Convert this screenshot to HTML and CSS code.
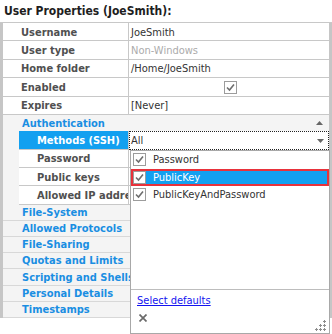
FILE: index.html
```html
<!DOCTYPE html>
<html>
<head>
<meta charset="utf-8">
<link rel="stylesheet" href="styles.css">
</head>
<body>
<div class="title">User Properties (JoeSmith):</div>
<div class="grid">
  <div class="row prop"><div class="label">Username</div><div class="value">JoeSmith</div></div>
  <div class="row prop"><div class="label">User type</div><div class="value muted">Non-Windows</div></div>
  <div class="row prop"><div class="label">Home folder</div><div class="value">/Home/JoeSmith</div></div>
  <div class="row prop"><div class="label">Enabled</div><div class="value centered"><span class="cb"><svg width="11" height="11" viewBox="0 0 11 11"><path d="M2 5.5 L4.5 8 L9 2.5" fill="none" stroke="#6e6e6e" stroke-width="1.6"/></svg></span></div></div>
  <div class="row prop"><div class="label">Expires</div><div class="value">[Never]</div></div>
  <div class="row cat open"><span>Authentication</span><svg class="tri" width="7" height="4" viewBox="0 0 7 4"><path d="M0 4 L3.5 0 L7 4 Z" fill="#666"/></svg></div>
  <div class="row prop sub selected"><div class="indent"></div><div class="label">Methods (SSH)</div><div class="value focus"><span>All</span><svg class="tri" width="7" height="4" viewBox="0 0 7 4"><path d="M0 0 L3.5 4 L7 0 Z" fill="#666"/></svg></div></div>
  <div class="row prop sub"><div class="indent"></div><div class="label">Password</div><div class="value"></div></div>
  <div class="row prop sub"><div class="indent"></div><div class="label">Public keys</div><div class="value"></div></div>
  <div class="row prop sub"><div class="indent"></div><div class="label">Allowed IP addresses</div><div class="value"></div></div>
  <div class="row cat"><span>File-System</span></div>
  <div class="row cat"><span>Allowed Protocols</span></div>
  <div class="row cat"><span>File-Sharing</span></div>
  <div class="row cat"><span>Quotas and Limits</span></div>
  <div class="row cat"><span>Scripting and Shells</span></div>
  <div class="row cat"><span>Personal Details</span></div>
  <div class="row cat"><span>Timestamps</span></div>
</div>

<div class="popup">
  <div class="list">
    <div class="item"><span class="cb"><svg width="11" height="11" viewBox="0 0 11 11"><path d="M2 5.5 L4.5 8 L9 2.5" fill="none" stroke="#6e6e6e" stroke-width="1.6"/></svg></span><span>Password</span></div>
    <div class="item active"><span class="cb"><svg width="11" height="11" viewBox="0 0 11 11"><path d="M2 5.5 L4.5 8 L9 2.5" fill="none" stroke="#6e6e6e" stroke-width="1.6"/></svg></span><span>PublicKey</span></div>
    <div class="item"><span class="cb"><svg width="11" height="11" viewBox="0 0 11 11"><path d="M2 5.5 L4.5 8 L9 2.5" fill="none" stroke="#6e6e6e" stroke-width="1.6"/></svg></span><span>PublicKeyAndPassword</span></div>
  </div>
  <div class="footer">
    <a class="link" href="#">Select defaults</a>
    <div class="footer-bottom">
      <svg class="close" width="8" height="8" viewBox="0 0 8 8"><path d="M0.5 0.5 L7.5 7.5 M7.5 0.5 L0.5 7.5" stroke="#6a6a6a" stroke-width="1.7"/></svg>
      <svg class="grip" width="12" height="11" viewBox="0 0 12 11"><g fill="#8c8c8c"><rect x="9" y="0" width="1" height="3"/><rect x="8" y="1" width="3" height="1"/><rect x="5" y="4" width="1" height="3"/><rect x="4" y="5" width="3" height="1"/><rect x="9" y="4" width="1" height="3"/><rect x="8" y="5" width="3" height="1"/><rect x="1" y="8" width="1" height="3"/><rect x="0" y="9" width="3" height="1"/><rect x="5" y="8" width="1" height="3"/><rect x="4" y="9" width="3" height="1"/><rect x="9" y="8" width="1" height="3"/><rect x="8" y="9" width="3" height="1"/></g></svg>
    </div>
  </div>
</div>
</body>
</html>
```

FILE: styles.css
```css
* { box-sizing: border-box; }
html, body { margin: 0; padding: 0; }
body {
  width: 332px;
  height: 334px;
  background: #fff;
  font-family: "DejaVu Sans Condensed", "DejaVu Sans", sans-serif;
  font-size: 11px;
  position: relative;
  overflow: hidden;
  color: #333;
}
.title {
  height: 23px;
  border-bottom: 1px solid #c8c8c8;
  padding-left: 4px;
  line-height: 23px;
  font-weight: bold;
  font-size: 12px;
  color: #1e1e1e;
}
.grid {
  border-left: 3px solid #c6c6c6;
  border-right: 3px solid #c6c6c6;
}
.row { display: flex; }
.prop { height: 18.4px; }
.label {
  width: 126px;
  flex: none;
  border-right: 1px solid #c8c8c8;
  border-bottom: 1px solid #c8c8c8;
  padding-left: 18px;
  padding-top: 1px;
  font-weight: bold;
  color: #505050;
  white-space: nowrap;
  overflow: hidden;
  display: flex;
  align-items: center;
}
.value {
  flex: 1;
  border-bottom: 1px solid #c8c8c8;
  padding-left: 2px;
  padding-top: 1px;
  color: #333;
  white-space: nowrap;
  display: flex;
  align-items: center;
}
.value.muted { color: #ababab; }
.value.centered { justify-content: center; }
.sub .indent { width: 16px; flex: none; background: #f4f4f4; }
.sub .label { width: 110px; }
.selected .label { background: #12a0f0; color: #fff; }
.value.focus {
  border: 1px dotted #222;
  padding-left: 1px;
  padding-right: 4px;
  justify-content: space-between;
}
.cat {
  height: 16.2px;
  background: #f4f4f4;
  border-bottom: 1px solid #d8d8d8;
  padding-left: 19px;
  padding-right: 6px;
  align-items: center;
  justify-content: space-between;
  font-weight: bold;
  color: #1a8ee2;
  white-space: nowrap;
}
.cat.open { border-bottom: none; }
.cb {
  width: 13px;
  height: 13px;
  border: 1px solid #9c9c9c;
  background: #fff;
  display: flex;
  align-items: center;
  justify-content: center;
  flex: none;
}
.popup {
  position: absolute;
  left: 130px;
  top: 150px;
  width: 200px;
  height: 184px;
  border: 1px solid #a8a8a8;
  background: #fff;
  display: flex;
  flex-direction: column;
}
.list {
  height: 139px;
  flex: none;
  border-bottom: 1px solid #bdbdbd;
}
.item {
  height: 17.5px;
  display: flex;
  align-items: center;
  gap: 7px;
  padding-left: 2px;
  color: #333;
  white-space: nowrap;
}
.item.active {
  background: #12a0f0;
  color: #fff;
  border: 2px solid #e8323b;
  padding-left: 0;
}
.footer {
  flex: 1;
  padding: 2px 2px 2px 6px;
  display: flex;
  flex-direction: column;
}
.link {
  color: #1414f0;
  text-decoration: underline;
  line-height: 18px;
}
.footer-bottom {
  flex: 1;
  display: flex;
  justify-content: space-between;
  align-items: flex-end;
  padding-left: 2px;
}
.close { margin-bottom: 9px; }
.grip { margin-bottom: 0; }
```
